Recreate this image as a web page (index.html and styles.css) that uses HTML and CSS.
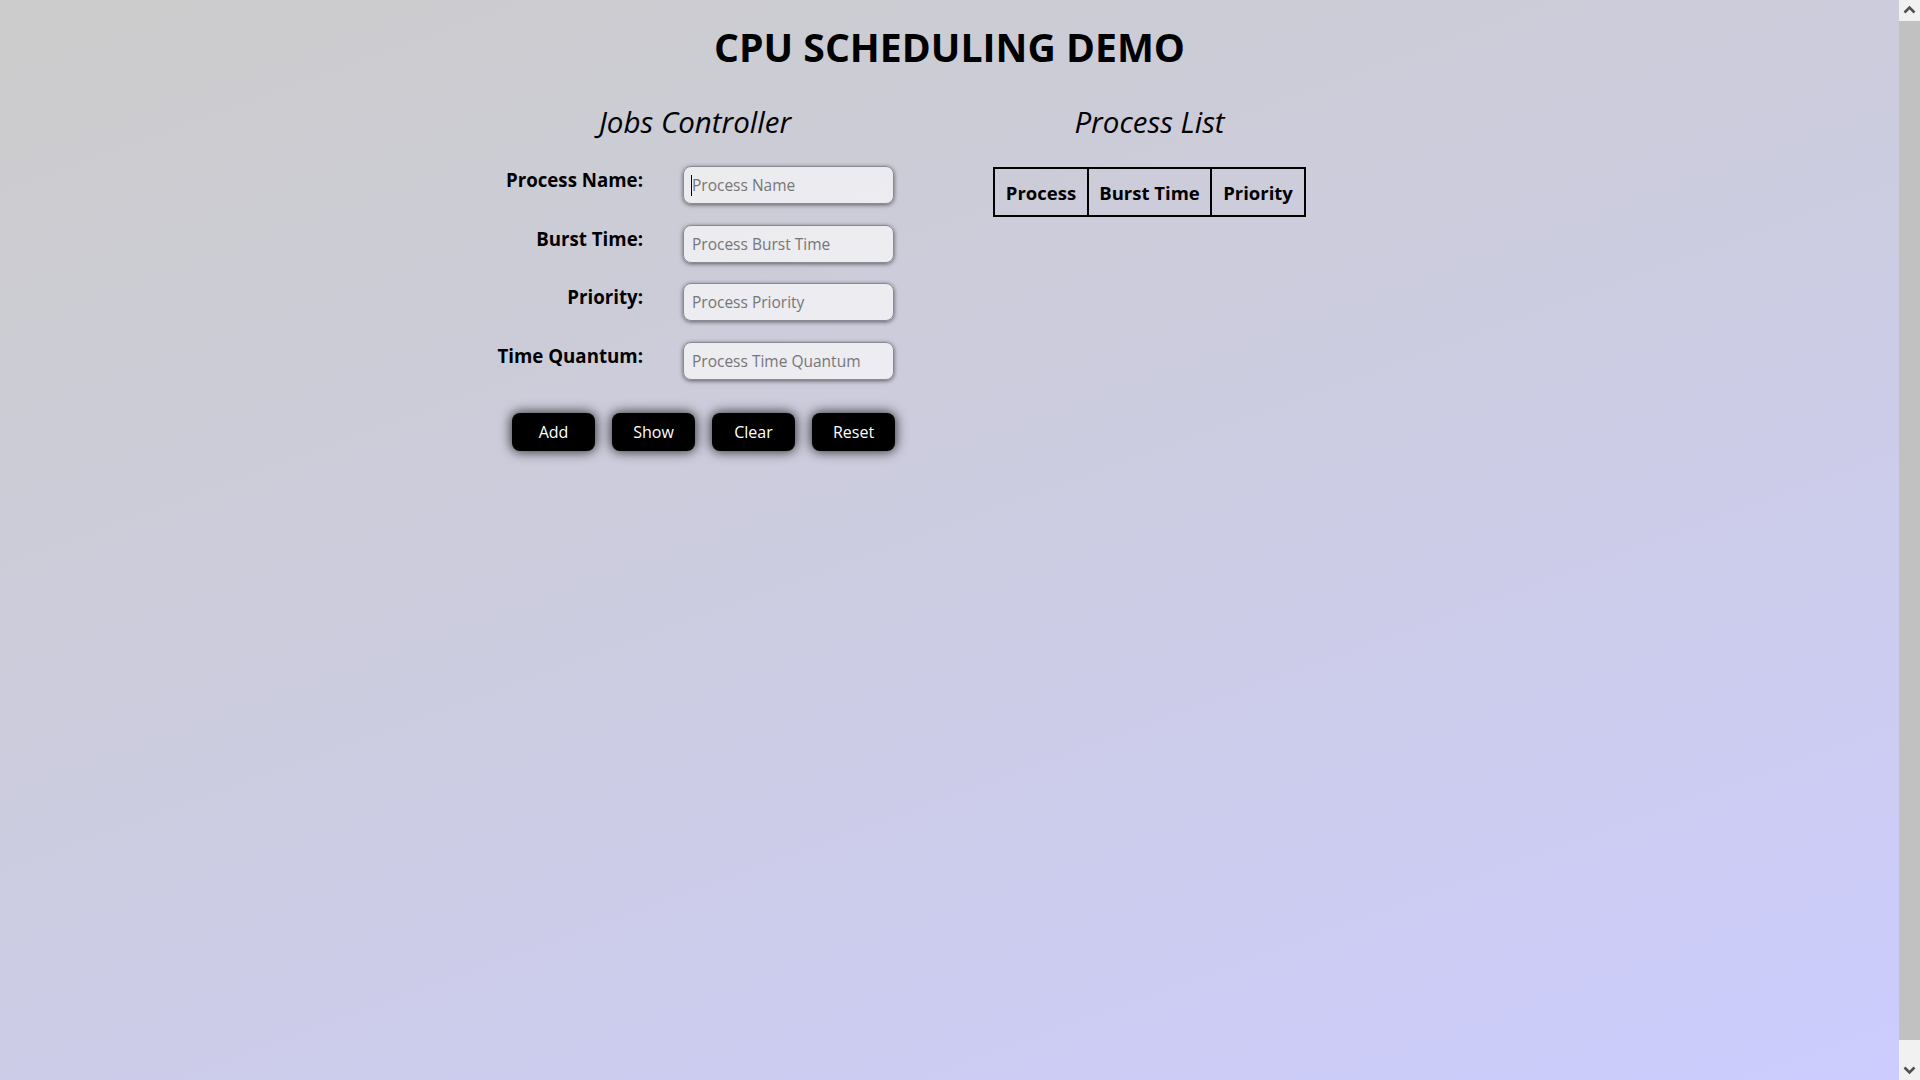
FILE: index.html
```html
<!DOCTYPE html>
<html lang="en">
<head>
<meta charset="utf-8">
<title>CPU Scheduling Demo</title>
<link rel="stylesheet" href="styles.css">
</head>
<body>
<div class="page">
  <h1 class="title">CPU SCHEDULING DEMO</h1>
  <div class="columns">
    <section class="jobs">
      <h2 class="section-title">Jobs Controller</h2>
      <form class="job-form" onsubmit="return false">
        <div class="field">
          <label class="field-label" for="pname">Process Name:</label>
          <span class="input-wrap">
            <input class="field-input" id="pname" type="text" placeholder="Process Name">
            <span class="caret"></span>
          </span>
        </div>
        <div class="field">
          <label class="field-label" for="pburst">Burst Time:</label>
          <span class="input-wrap">
            <input class="field-input" id="pburst" type="text" placeholder="Process Burst Time">
          </span>
        </div>
        <div class="field">
          <label class="field-label" for="pprio">Priority:</label>
          <span class="input-wrap">
            <input class="field-input" id="pprio" type="text" placeholder="Process Priority">
          </span>
        </div>
        <div class="field">
          <label class="field-label" for="pquant">Time Quantum:</label>
          <span class="input-wrap">
            <input class="field-input" id="pquant" type="text" placeholder="Process Time Quantum">
          </span>
        </div>
        <div class="actions">
          <button class="btn" type="button">Add</button>
          <button class="btn" type="button">Show</button>
          <button class="btn" type="button">Clear</button>
          <button class="btn" type="button">Reset</button>
        </div>
      </form>
    </section>
    <section class="processes">
      <h2 class="section-title">Process List</h2>
      <table class="process-table">
        <colgroup>
          <col class="col-process">
          <col class="col-burst">
          <col class="col-priority">
        </colgroup>
        <thead>
          <tr><th>Process</th><th>Burst Time</th><th>Priority</th></tr>
        </thead>
      </table>
    </section>
    <section class="results"></section>
  </div>
</div>
<div class="scrollbar" aria-hidden="true">
  <div class="scroll-btn">
    <svg width="21" height="21" viewBox="0 0 21 21"><path d="M5.5 12.5 L10.5 7.5 L15.5 12.5" fill="none" stroke="#505050" stroke-width="2.6" stroke-linejoin="miter"/></svg>
  </div>
  <div class="scroll-track"><div class="scroll-thumb"></div></div>
  <div class="scroll-btn">
    <svg width="21" height="21" viewBox="0 0 21 21"><path d="M5.5 8.5 L10.5 13.5 L15.5 8.5" fill="none" stroke="#505050" stroke-width="2.6" stroke-linejoin="miter"/></svg>
  </div>
</div>
</body>
</html>
```
FILE: styles.css
```css
html, body {
  margin: 0;
  padding: 0;
  height: 100%;
  overflow: hidden;
}

body {
  font-family: "Open Sans", "Noto Sans", sans-serif;
  color: #000;
  background: linear-gradient(160deg, #cccccc 0%, #ccccdf 45%, #ccccff 100%);
}

.page {
  width: calc(100% - 21px);
  height: 100%;
  padding-top: 23px;
  box-sizing: border-box;
}

.title {
  margin: 0;
  font-size: 39.2px;
  line-height: 48px;
  font-weight: 700;
  text-align: center;
}

.columns {
  display: flex;
  justify-content: center;
  gap: 99px;
  margin-top: 33px;
}

.jobs {
  width: 400px;
  display: flex;
  flex-direction: column;
  align-items: center;
}

.processes {
  width: 311px;
  display: flex;
  flex-direction: column;
  align-items: center;
}

.results {
  width: 0;
}

.section-title {
  margin: 0;
  font-size: 29.5px;
  line-height: 36px;
  font-style: italic;
  font-weight: 400;
}

.job-form {
  width: 400px;
  margin-top: 26px;
  display: flex;
  flex-direction: column;
  gap: 20.5px;
}

.field {
  display: grid;
  grid-template-columns: 148px 211px;
  column-gap: 40px;
  align-items: start;
}

.field-label {
  text-align: right;
  font-size: 18.7px;
  line-height: 24px;
  font-weight: 700;
  padding-top: 2px;
  white-space: nowrap;
}

.input-wrap {
  position: relative;
  display: block;
  width: 211px;
  height: 38px;
}

.field-input {
  box-sizing: border-box;
  display: block;
  width: 211px;
  height: 38px;
  margin: 0;
  padding: 0 8px;
  font-family: inherit;
  font-size: 15.5px;
  color: #000;
  caret-color: #000;
  background: rgba(255, 255, 255, 0.62);
  border: 1px solid #8a8a96;
  border-radius: 8px;
  box-shadow: 0 1px 4px rgba(0, 0, 0, 0.55);
  outline: none;
}

.field-input::placeholder {
  color: #767676;
}

.caret {
  position: absolute;
  left: 8px;
  top: 9px;
  width: 1px;
  height: 21px;
  background: #000;
  pointer-events: none;
}

.actions {
  display: flex;
  justify-content: flex-end;
  gap: 17px;
  margin-top: 13px;
}

.btn {
  width: 83px;
  height: 38px;
  margin: 0;
  padding: 0;
  font-family: inherit;
  font-size: 16px;
  color: #fff;
  background: #000;
  border: none;
  border-radius: 8px;
  box-shadow: 0 0 12px 1px rgba(0, 0, 0, 0.75);
  cursor: pointer;
}

.process-table {
  margin-top: 27px;
  border-collapse: collapse;
  table-layout: fixed;
  width: 311px;
  border: 2px solid #000;
}

.col-process { width: 94px; }
.col-burst { width: 123px; }
.col-priority { width: 94px; }

.process-table th {
  border: 2px solid #000;
  height: 46px;
  padding: 0;
  font-size: 18.5px;
  font-weight: 700;
  text-align: center;
  white-space: nowrap;
}

.scrollbar {
  position: fixed;
  top: 0;
  right: 0;
  width: 21px;
  height: 100%;
  background: #f1f1f1;
  display: flex;
  flex-direction: column;
}

.scroll-btn {
  height: 21px;
  flex: none;
}

.scroll-btn svg {
  display: block;
}

.scroll-track {
  flex: 1;
  display: flex;
  flex-direction: column;
}

.scroll-thumb {
  height: 1019px;
  background: #c1c1c1;
}
```
